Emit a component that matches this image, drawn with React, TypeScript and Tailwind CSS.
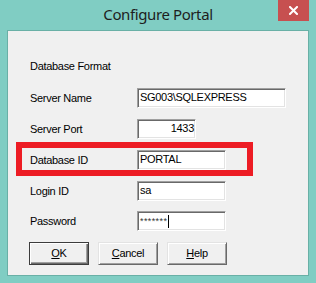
import React from "react";

const FONT = "font-['Liberation_Sans',Arial,sans-serif] text-[11px] leading-[13px] tracking-[-0.3px] text-black";

function Field({ w, children, right }: { w: number; children?: React.ReactNode; right?: boolean }) {
  return (
    <div
      style={{ width: w }}
      className={`h-[20px] bg-white border border-t-[#a0a0a0] border-l-[#a0a0a0] border-b-white border-r-white shadow-[inset_1px_1px_0_#696969,inset_-1px_-1px_0_#e3e3e3] pt-[2px] ${right ? "pr-[1px] text-right" : "pl-[2px]"} ${FONT} whitespace-nowrap overflow-hidden`}
    >
      {children}
    </div>
  );
}

function Row({ label, mt, children }: { label: string; mt: string; children: React.ReactNode }) {
  return (
    <div className={`flex items-center h-[20px] pl-[22px] ${mt}`}>
      <div className={`w-[107px] ${FONT}`}>{label}</div>
      {children}
    </div>
  );
}

function Button({ children, def }: { children: React.ReactNode; def?: boolean }) {
  return (
    <div
      className={`w-[60px] h-[23px] flex items-center justify-center bg-[#f0f0f0] ${FONT} ${
        def
          ? "border border-[#3c3c3c] shadow-[inset_1px_1px_0_#ffffff,inset_-1px_-1px_0_#696969,inset_-2px_-2px_0_#a0a0a0]"
          : "border border-t-[#e3e3e3] border-l-[#e3e3e3] border-b-[#696969] border-r-[#696969] shadow-[inset_1px_1px_0_#ffffff,inset_-1px_-1px_0_#a0a0a0]"
      }`}
    >
      {children}
    </div>
  );
}

export default function App() {
  return (
    <div className="w-[316px] h-[283px] bg-[#80cdc3] flex flex-col">
      <div className="h-[30px] flex items-start shrink-0">
        <div className="w-[38px]" />
        <div className="flex-1 text-center leading-[28px] text-[15px] tracking-[-0.4px] text-[#1e1e1e] font-['Noto_Sans',sans-serif]">
          Configure Portal
        </div>
        <div className="w-[31px] h-[21px] bg-[#c75050] flex items-center justify-center mr-[7px]">
          <svg width="9" height="9" viewBox="0 0 9 9">
            <path d="M1 1 L8 8 M8 1 L1 8" stroke="#ffffff" strokeWidth="2" strokeLinecap="square" />
          </svg>
        </div>
      </div>
      <div className="relative mx-[7px] mb-[7px] flex-1 border border-[#69b0a6] bg-[#f0f0f0] flex flex-col">
        <div className={`pt-[29px] pl-[22px] ${FONT}`}>Database Format</div>
        <Row label="Server Name" mt="mt-[15px]">
          <Field w={149}>{"SG003\\SQLEXPRESS"}</Field>
        </Row>
        <Row label="Server Port" mt="mt-[11px]">
          <Field w={59} right>1433</Field>
        </Row>
        <Row label="Database ID" mt="mt-[11px]">
          <Field w={89}>PORTAL</Field>
        </Row>
        <Row label="Login ID" mt="mt-[11px]">
          <Field w={89}>sa</Field>
        </Row>
        <Row label="Password" mt="mt-[10px]">
          <Field w={89}>
            <span className="inline-flex items-start">
              <span className="text-[9px] leading-[11px] tracking-[0.4px] text-[#333] pt-[1px]">*******</span>
              <span className="inline-block w-px h-[13px] bg-black ml-px" />
            </span>
          </Field>
        </Row>
        <div className="flex gap-[9px] pl-[21px] mt-[11px]">
          <Button def>
            <span><span className="underline">O</span>K</span>
          </Button>
          <Button>
            <span><span className="underline">C</span>ancel</span>
          </Button>
          <Button>
            <span><span className="underline">H</span>elp</span>
          </Button>
        </div>
        <div className="absolute left-[8px] top-[111px] w-[237px] h-[34px] border-[6px] border-[#ed1c24] pointer-events-none" />
      </div>
    </div>
  );
}
